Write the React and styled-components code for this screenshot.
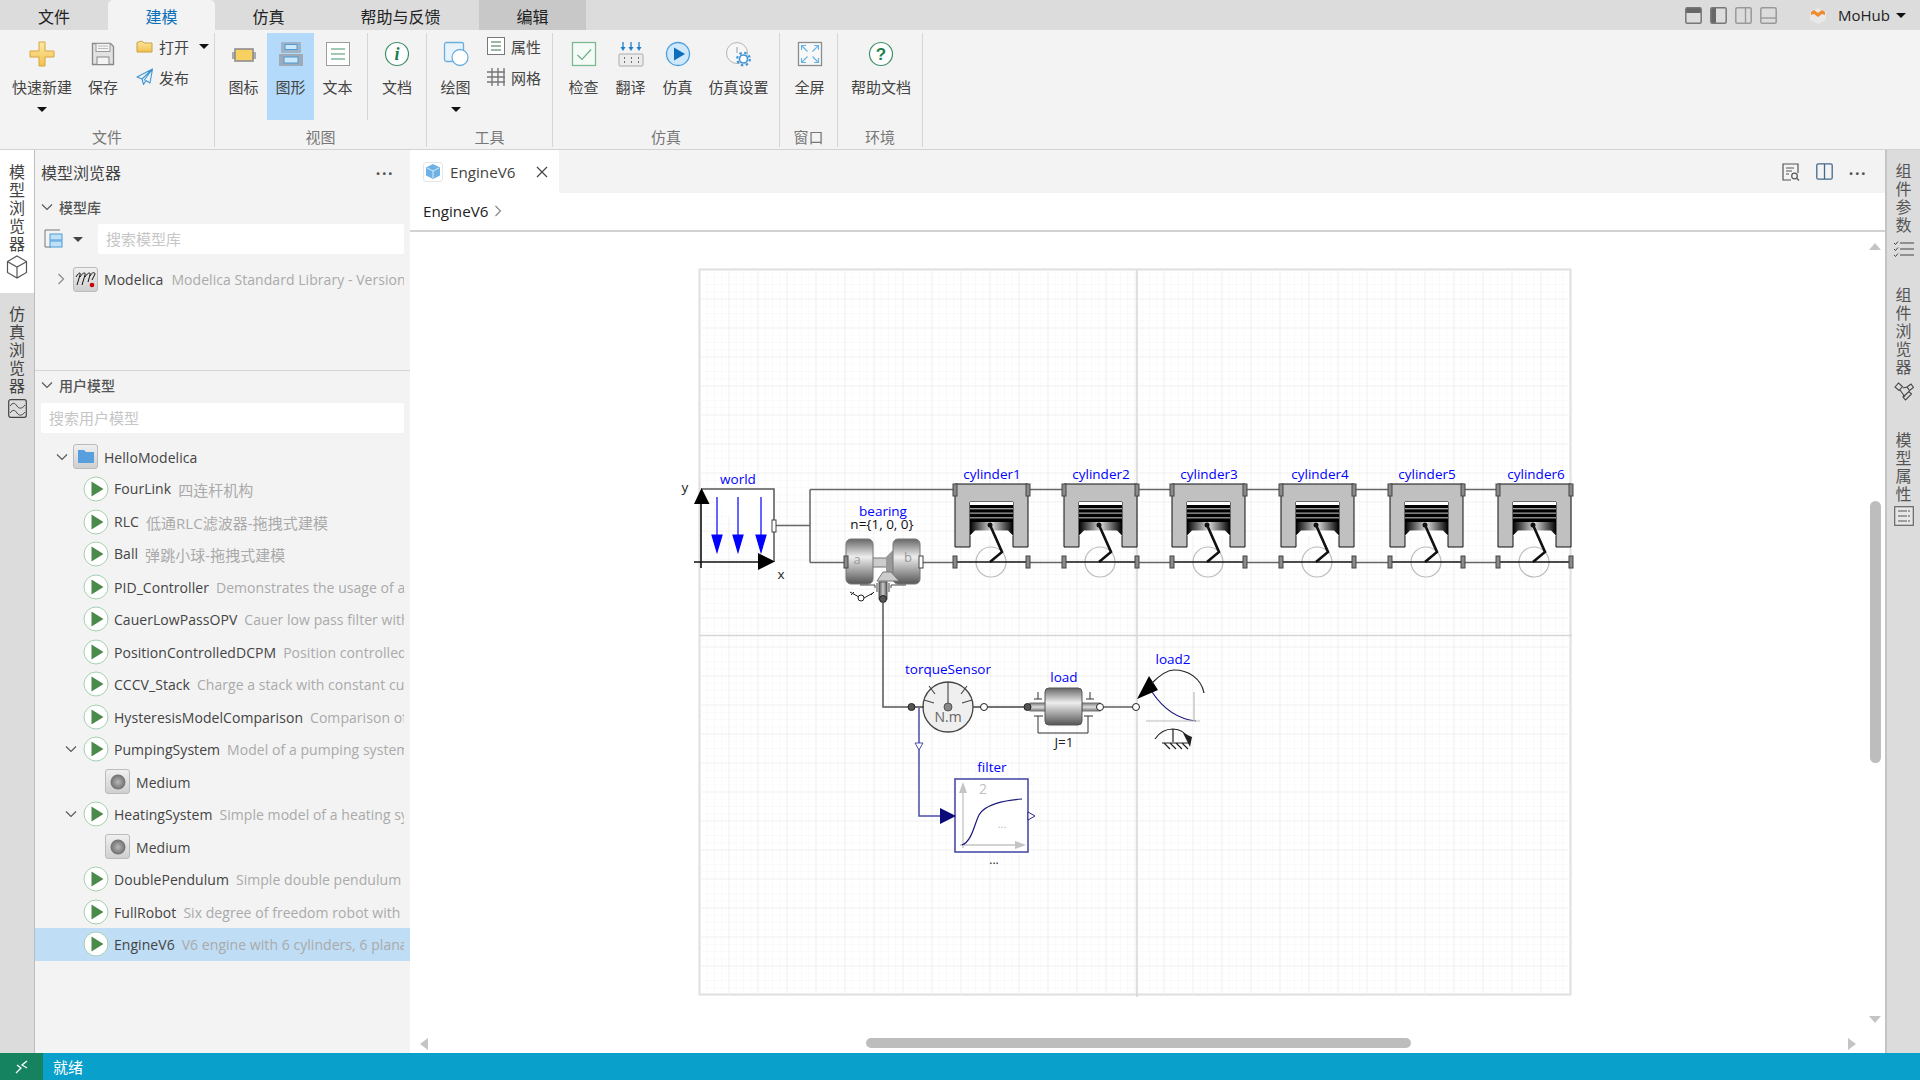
import React from "react";
import styled, { createGlobalStyle } from "styled-components";

const CJK = `"Open Sans", "Noto Sans CJK SC", sans-serif`;

const Global = createGlobalStyle`
  html, body { margin: 0; padding: 0; width: 1920px; height: 1080px; overflow: hidden; background: #fff; }
  body { font-family: ${CJK}; color: #333; }
  * { box-sizing: border-box; }
  svg { display: block; flex: none; }
`;

const Page = styled.div`
  width: 1920px; height: 1080px; display: flex; flex-direction: column; overflow: hidden;
`;
const TopBar = styled.div`
  height: 30px; background: #dcdcdc; display: flex; align-items: stretch; flex: none;
`;
const TopTab = styled.div`
  width: ${p => p.$w}px; display: flex; align-items: center; justify-content: center; padding-top: 1px;
  font-size: 16px; color: ${p => (p.$active ? "#0a70b8" : "#222")};
  background: ${p => (p.$active ? "#f3f3f3" : p.$edit ? "#c8c8c8" : "transparent")};
  border-radius: ${p => (p.$active ? "5px 5px 0 0" : "0")};
`;
const TopSpacer = styled.div`flex: 1;`;
const WinIcons = styled.div`
  display: flex; align-items: center; gap: 8px; margin-right: 33px;
`;
const UserBox = styled.div`
  display: flex; align-items: center; gap: 6px; font-size: 15px; color: #222; margin-right: 14px;
  > svg { margin-right: 6px; }
`;
const Caret = styled.span`
  display: inline-block; width: 0; height: 0; flex: none;
  border-left: 5px solid transparent; border-right: 5px solid transparent; border-top: 5px solid ${p => p.$c || "#111"};
`;
const Ribbon = styled.div`
  height: 120px; flex: none; background: #f3f3f3; border-bottom: 1px solid #d2d2d2; display: flex; padding-top: 3px;
`;
const Group = styled.div`
  width: ${p => p.$w}px; display: flex; flex-direction: column; flex: none; height: 114px;
  border-right: 1px solid #d6d6d6;
`;
const GroupItems = styled.div`
  display: flex; height: 87px; flex: none; padding-left: ${p => p.$pl || 0}px;
`;
const GroupLabel = styled.div`
  flex: 1; text-align: center; font-size: 15px; color: #777; line-height: 16px; padding-top: 9px;
`;
const Big = styled.div`
  width: ${p => p.$w}px; flex: none; height: 87px; display: flex; flex-direction: column; align-items: center;
  padding-top: 8px; font-size: 15px; color: #444; white-space: nowrap;
  background: ${p => (p.$on ? "#b3d9fb" : "transparent")};
  > span { margin-top: 11px; line-height: 18px; }
  > i { margin-top: 11px; display: flex; height: 5px; }
`;
const VDiv = styled.div`
  width: 1px; height: 87px; flex: none; background: #d6d6d6; margin-left: 6px;
`;
const SmallCol = styled.div`
  display: flex; flex-direction: column; gap: 5px; padding-left: ${p => p.$pl}px; width: ${p => p.$w}px; flex: none;
`;
const Small = styled.div`
  display: flex; align-items: center; gap: 6px; height: 26px; font-size: 15px; color: #444;
  > em { font-style: normal; display: flex; margin-left: 4px; }
`;
const Body = styled.div`flex: 1; display: flex; min-height: 0;`;
const Rail = styled.div`
  width: ${p => p.$w}px; flex: none; background: #dcdcdc; display: flex; flex-direction: column; align-items: center;
  ${p => (p.$right ? "border-left: 2px solid #c4c4c4; padding-top: 13px; gap: 30px;" : "border-right: 1px solid #bdbdbd;")}
`;
const RailTab = styled.div`
  width: 100%; display: flex; flex-direction: column; align-items: center; gap: ${p => p.$g || 3}px;
  padding-top: ${p => p.$pt || 0}px; height: ${p => (p.$h ? p.$h + "px" : "auto")};
  background: ${p => (p.$on ? "#fff" : "transparent")};
`;
const VText = styled.div`
  writing-mode: vertical-rl; font-size: 16px; letter-spacing: 2px; line-height: 18px; color: ${p => p.$c || "#555"};
  font-family: "Noto Sans CJK SC", sans-serif;
`;
const Panel = styled.div`
  width: 375px; flex: none; background: #f3f3f3; display: flex; flex-direction: column;
`;
const PanelHead = styled.div`
  height: 43px; flex: none; display: flex; align-items: center; justify-content: space-between;
  padding: 0 16px 0 6px; font-size: 16px; color: #444;
`;
const Dots = styled.div`
  font-size: 16px; font-weight: 700; letter-spacing: 1.5px; color: #555; line-height: 1; padding-bottom: 6px;
`;
const SecHead = styled.div`
  height: 28px; flex: none; display: flex; align-items: center; gap: 6px; padding-left: 6px;
  font-size: 14px; font-weight: 500; color: #555;
`;
const LibBlock = styled.div`
  height: 178px; flex: none; border-bottom: 1px solid #d4d4d4;
`;
const SearchRow = styled.div`
  display: flex; align-items: center; height: 30px; margin-top: 3px; padding: 0 6px 0 8px;
  > span { margin: 0 15px 0 10px; display: flex; }
`;
const Search = styled.div`
  flex: 1; height: 30px; background: #fff; border-radius: 2px;
  font-size: 15px; color: #c6c6c6; line-height: 30px; padding-left: 8px;
`;
const UserSearch = styled(Search)`
  margin: 4px 6px 0 6px; flex: none;
`;
const Tree = styled.div`
  margin-top: 7.5px; display: flex; flex-direction: column;
`;
const Row = styled.div`
  height: 32.5px; flex: none; display: flex; align-items: center; padding-left: ${p => p.$pl}px; padding-right: 6px;
  background: ${p => (p.$sel ? "#bfddf4" : "transparent")}; font-size: 14px;
`;
const LibRow = styled(Row)`margin-top: 10px; height: 30px;`;
const Chevron = styled.span`
  width: 12px; flex: none; display: flex; justify-content: center; margin-right: ${p => p.$mr || 0}px;
`;
const RowText = styled.div`
  flex: 1; min-width: 0; overflow: hidden; white-space: nowrap; margin-left: ${p => p.$ml || 6}px; letter-spacing: 0.05px;
  display: flex; gap: ${p => p.$gap || 8}px; padding-top: 1px;
`;
const Name = styled.span`color: #444;`;
const Desc = styled.span`color: #aaa; font-size: ${p => (p.$cjk ? 15 : 14)}px;`;
const Main = styled.div`
  flex: 1; min-width: 0; display: flex; flex-direction: column; background: #fff; position: relative;
`;
const DocTabs = styled.div`
  height: 43px; flex: none; background: #f3f3f3; display: flex; justify-content: space-between;
`;
const DocTab = styled.div`
  width: 149px; background: #fff; display: flex; align-items: center; padding-left: 13px; font-size: 15.2px; color: #444;
  > b { font-weight: 400; margin-left: 7px; flex: 1; }
  > svg:last-child { margin-right: 11px; }
`;
const DocTools = styled.div`
  display: flex; align-items: center; gap: 16px; padding-right: 18px;
`;
const Crumb = styled.div`
  height: 39px; flex: none; border-bottom: 2px solid #d2d2d2; padding-left: 13px; display: flex; align-items: center; gap: 6px;
  font-size: 15.2px; color: #222; padding-bottom: 1px;
`;
const Canvas = styled.div`flex: 1; min-height: 0; position: relative; overflow: hidden;`;
const CanvasSvg = styled.svg`width: 100%; height: 100%;`;
const VThumb = styled.div`
  position: absolute; right: 4px; top: 269px; width: 11px; height: 262px; border-radius: 6px; background: #bdbdbd;
`;
const HThumb = styled.div`
  position: absolute; left: 456px; bottom: 5px; width: 545px; height: 10px; border-radius: 5px; background: #bdbdbd;
`;
const ArrowU = styled.div`
  position: absolute; right: 4px; width: 0; height: 0; border-left: 6px solid transparent; border-right: 6px solid transparent;
  ${p => (p.$down ? "bottom: 30px; border-top: 7px solid #c4c4c4;" : "top: 11px; border-bottom: 7px solid #c4c4c4;")}
`;
const ArrowH = styled.div`
  position: absolute; bottom: 3px; width: 0; height: 0; border-top: 6px solid transparent; border-bottom: 6px solid transparent;
  ${p => (p.$right ? "right: 29px; border-left: 8px solid #c4c4c4;" : "left: 10px; border-right: 8px solid #c4c4c4;")}
`;
const Status = styled.div`
  height: 27px; flex: none; background: #0aa0cc; display: flex; align-items: center; color: #fff; font-size: 15px;
`;
const StatusIcon = styled.div`
  width: 43px; height: 100%; background: #15835f; display: flex; align-items: center; justify-content: center; margin-right: 10px;
`;

/* ---------- Icons ---------- */
const I = ({ w = 26, h = 26, children }) => <svg width={w} height={h} viewBox={`0 0 ${w} ${h}`} fill="none">{children}</svg>;
const Defs = () => (
  <svg width="0" height="0" style={{ position: "absolute" }}>
    <defs>
      <linearGradient id="gold" x1="0" y1="0" x2="0" y2="1"><stop offset="0" stopColor="#fde9a4" /><stop offset="1" stopColor="#f3c04e" /></linearGradient>
      <radialGradient id="ball"><stop offset="0" stopColor="#b8b8b8" /><stop offset="1" stopColor="#6e6e6e" /></radialGradient>
    </defs>
  </svg>
);
const PlusIcon = () => <I><path d="M10 1h6v9h9v6h-9v9h-6v-9H1v-6h9z" fill="url(#gold)" stroke="#d6a63a" /></I>;
const SaveIcon = () => (
  <I><path d="M2.5 2.5h18l3 3v18h-21z" fill="#e2e2e2" stroke="#888" strokeWidth="1.3" /><rect x="6" y="2.5" width="14" height="8" fill="#f4f4f4" stroke="#999" /><path d="M8 5h10M8 7.5h10" stroke="#bbb" /><rect x="7" y="16" width="12" height="7.5" fill="#f4f4f4" stroke="#888" /></I>
);
const FolderIcon = () => <I w={17} h={14}><path d="M1 3.5 6 2l2 2h8v9H1z" fill="url(#gold)" stroke="#c9a13f" /></I>;
const SendIcon = () => <I w={17} h={18}><path d="M16.5 1 1 9l5 2 1.5 5.5 2.5-4 4 2.5zM6 11 16.5 1 8 12.5" stroke="#3d95d6" strokeWidth="1.1" strokeLinejoin="round" /></I>;
const ChipIcon = () => <I><rect x="1" y="11" width="24" height="7" fill="#aaa" /><rect x="4" y="8" width="18" height="12" fill="#f7d160" stroke="#8e8e8e" strokeWidth="1.6" /></I>;
const DiagramIcon = () => (
  <I><rect x="3" y="1" width="20" height="11" rx="1" fill="#a0b3c6" /><rect x="1" y="13" width="24" height="12" rx="1" fill="#9eaab8" /><rect x="7" y="3.5" width="12" height="5" fill="#cde7fb" stroke="#4b9bd8" /><rect x="6" y="16" width="14" height="6" fill="#cde7fb" stroke="#4b9bd8" /></I>
);
const TextIcon = () => <I><rect x="1.5" y="1.5" width="23" height="23" fill="#fff" stroke="#9c9c9c" /><path d="M6 8h14M6 13h14M6 18h14" stroke="#80b89a" strokeWidth="1.3" /></I>;
const InfoIcon = () => <I><circle cx="13" cy="13" r="11.5" fill="#fff" stroke="#3f9068" strokeWidth="1.2" /><text x="13" y="19" textAnchor="middle" fontFamily="Liberation Serif, serif" fontStyle="italic" fontWeight="700" fontSize="18" fill="#1e8050">i</text></I>;
const DrawIcon = () => <I><rect x="1.5" y="1.5" width="19" height="19" rx="2" fill="#e9f3fb" stroke="#6aaee0" strokeWidth="1.3" /><circle cx="17" cy="16.5" r="8" fill="#fff" stroke="#6aaee0" strokeWidth="1.3" /></I>;
const PropIcon = () => <I w={18} h={18}><rect x=".5" y=".5" width="17" height="17" fill="#fff" stroke="#777" /><path d="M4 5h10M4 9h10M4 13h10" stroke="#7f9f8a" strokeWidth="1.4" /></I>;
const GridIcon = () => <I w={18} h={18}><path d="M5 0v18M11 0v18M17 0v18M0 4h18M0 9h18M0 14h18" stroke="#777" strokeWidth="1.4" /></I>;
const CheckIcon = () => <I><rect x="1.5" y="1.5" width="23" height="23" fill="#f4fbf6" stroke="#7fb995" strokeWidth="1.3" /><path d="M6.5 14l4.5 4.5 9-10" stroke="#6cad83" strokeWidth="1.2" /></I>;
const TransIcon = () => (
  <I><path d="M5 1v7M13 1v7M21 1v7" stroke="#1f7fc8" strokeWidth="1.3" /><path d="M2.5 6 5 10l2.5-4zM10.5 6 13 10l2.5-4zM18.5 6 21 10l2.5-4z" fill="#1f7fc8" /><rect x="1" y="13" width="24" height="12" rx="1" fill="#ececec" stroke="#aaa" /><path d="M6 17h1M13 17h1M20 17h1M6 21h1M13 21h1M20 21h1" stroke="#444" strokeWidth="1.6" /></I>
);
const SimIcon = () => <I><circle cx="13" cy="13" r="11.5" fill="#cfe8fb" stroke="#4c9fdc" strokeWidth="1.3" /><path d="M9 6.5 20 13 9 19.5z" fill="#0d6fbb" /></I>;
const SetIcon = () => (
  <I w={28} h={26}><circle cx="12" cy="12" r="10.5" fill="#f7f7f7" stroke="#b5b5b5" /><path d="M12 6v6" stroke="#999" /><circle cx="18.5" cy="18" r="4" fill="#fff" stroke="#3d95d6" strokeWidth="1.6" /><circle cx="18.5" cy="18" r="6.3" stroke="#3d95d6" strokeWidth="2.2" strokeDasharray="2.4 2.55" /></I>
);
const FullIcon = () => (
  <I><rect x="1.5" y="1.5" width="23" height="23" fill="#f8f8f8" stroke="#8c8c8c" strokeWidth="1.3" /><path d="M4.5 4.5l6 6M21.5 4.5l-6 6M4.5 21.5l6-6M21.5 21.5l-6-6M4.5 9V4.5H9M17 4.5h4.5V9M4.5 17v4.5H9M17 21.5h4.5V17" stroke="#62b2e4" strokeWidth="1.1" /></I>
);
const HelpIcon = () => <I><circle cx="13" cy="13" r="11.5" fill="#fff" stroke="#3f9068" strokeWidth="1.2" /><text x="13" y="19" textAnchor="middle" fontFamily="Liberation Sans, sans-serif" fontWeight="700" fontSize="17" fill="#1e8050">?</text></I>;
const Win = ({ k }) => (
  <svg width="17" height="17" viewBox="0 0 17 17" fill="none">
    {k === 0 && <rect x="1" y="1" width="15" height="5" fill="#666" />}
    {k === 1 && <rect x="1" y="1" width="5" height="15" fill="#666" />}
    {k === 2 && <path d="M10.5 1v15" stroke="#999" strokeWidth="1.4" />}
    {k === 3 && <path d="M1 11h15" stroke="#999" strokeWidth="1.4" />}
    <rect x=".8" y=".8" width="15.4" height="15.4" rx="1.5" stroke={k < 2 ? "#777" : "#999"} strokeWidth="1.5" />
  </svg>
);
const Logo = () => (
  <svg width="16" height="17" viewBox="0 0 16 17">
    <path d="M0 5l8-4 8 4v8l-8 4-8-4z" fill="#e8e8e8" />
    <path d="M1 5l3-2 4 3 4-3 3 2v3l-3-1-4 3-4-3-3 1z" fill="#f08a2c" />
  </svg>
);
const Cube = ({ c = "#555", s = 22 }) => (
  <svg width={s} height={s + 2} viewBox="0 0 22 24" fill="none"><path d="M11 1l9.5 5.5v11L11 23l-9.5-5.5v-11zM2 7l9 5 9-5M11 12v11" stroke={c} strokeWidth="1.2" /></svg>
);
const WaveIcon = () => <svg width="19" height="19" viewBox="0 0 19 19" fill="none"><rect x=".7" y=".7" width="17.6" height="17.6" rx="2" stroke="#444" strokeWidth="1.2" /><path d="M2 7c3-4 5-3 7 0s5 3 8-1M2 14c3-4 5-3 7 0s5 3 8-1" stroke="#444" /></svg>;
const ListIcon = () => <svg width="22" height="16" viewBox="0 0 22 16" fill="none"><path d="M7 2h14M7 8h14M7 14h14" stroke="#444" strokeWidth="1.1" /><path d="M1 2l1.5 1.5L5 .5M1 8l1.5 1.5L5 6.5M1 14l1.5 1.5L5 12.5" stroke="#444" /></svg>;
const NodeIcon = () => <svg width="20" height="20" viewBox="0 0 20 20" fill="none"><path d="M1 5l3.5-4 4 3.5-3.5 4zM13 5l4-3 2.5 3.5-4 3zM9 15l6-5.5 2.5 2.5-6 6zM6 8l5 7M9 6l4-1" stroke="#444" strokeWidth="1.1" /></svg>;
const FormIcon = () => <svg width="20" height="20" viewBox="0 0 20 20" fill="none"><rect x=".7" y=".7" width="18.6" height="18.6" fill="#e6e6e6" stroke="#666" strokeWidth="1.2" /><path d="M4 5h12M4 10h12M4 15h12" stroke="#555" strokeDasharray="9 1 2 0" /></svg>;
const Play = () => <svg width="26" height="26" viewBox="0 0 26 26"><circle cx="13" cy="13" r="12" fill="#fff" stroke="#a6cfae" /><path d="M8.5 5.5 20.5 13l-12 7.5z" fill="#4a8a4a" /></svg>;
const ChevD = () => <svg width="12" height="8" viewBox="0 0 12 8" fill="none"><path d="M1 1.5l5 5 5-5" stroke="#555" strokeWidth="1.1" /></svg>;
const ChevR = ({ c = "#888" }) => <svg width="8" height="12" viewBox="0 0 8 12" fill="none"><path d="M1.5 1l5 5-5 5" stroke={c} strokeWidth="1.2" /></svg>;
const TileBox = styled.div`
  width: 25px; height: 25px; flex: none; border-radius: 3px; border: 1px solid #bbb; background: linear-gradient(#f0f0f0, #cfcfcf);
  display: flex; align-items: center; justify-content: center;
`;
const LibTile = () => (
  <TileBox><svg width="22" height="18" viewBox="0 0 22 18" fill="none"><path d="M1 7c3-5 5-5 4-2L2 15M5 7c3-5 6-5 5-2L7 15M10 7c3-5 6-5 5-2l-2 7M15 6c2-4 5-4 5-2l-3 6" stroke="#111" /><circle cx="17" cy="15" r="2.3" fill="#c00" /></svg></TileBox>
);
const FolderTile = () => <TileBox><svg width="18" height="15" viewBox="0 0 18 15"><path d="M1 1h6l2 2h8v11H1z" fill="#5a9fdd" /></svg></TileBox>;
const BallTile = () => <TileBox><svg width="16" height="16" viewBox="0 0 16 16"><circle cx="8" cy="8" r="7.5" fill="url(#ball)" /></svg></TileBox>;
const TreeSwitch = () => (
  <svg width="20" height="20" viewBox="0 0 20 20" fill="none"><path d="M17 1H2v17h6" stroke="#777" /><rect x="7" y="5" width="12" height="6" fill="#bfe0f7" stroke="#4b9bd8" /><rect x="7" y="12" width="12" height="6" fill="#bfe0f7" stroke="#4b9bd8" /></svg>
);
const DocTile = styled.div`
  width: 20px; height: 20px; flex: none; border: 1px solid #e6e6e6; border-radius: 3px; display: flex; align-items: center; justify-content: center;
`;
const CubeTile = () => (
  <DocTile><svg width="14" height="15" viewBox="0 0 14 15"><path d="M7 0l7 3.5v8L7 15l-7-3.5v-8z" fill="#6db1e6" /><path d="M1 4l6 3 6-3M7 7v7" stroke="#d8ecfb" fill="none" /></svg></DocTile>
);
const Close = () => <svg width="12" height="12" viewBox="0 0 12 12"><path d="M1 1l10 10M11 1 1 11" stroke="#444" strokeWidth="1.2" /></svg>;
const FindIcon = () => <svg width="18" height="18" viewBox="0 0 18 18" fill="none"><path d="M9 17H1V1h15v9" stroke="#555" strokeWidth="1.2" /><path d="M4 5h8M4 8h6M4 11h3" stroke="#555" /><circle cx="12.5" cy="13" r="2.8" stroke="#555" strokeWidth="1.2" /><path d="M14.5 15l2.5 2.5" stroke="#555" strokeWidth="1.2" /></svg>;
const SplitIcon = () => <svg width="17" height="17" viewBox="0 0 17 17" fill="none"><rect x=".8" y=".8" width="15.4" height="15.4" rx="1.5" stroke="#44688c" strokeWidth="1.3" /><path d="M8.5 1v15" stroke="#44688c" strokeWidth="1.3" /></svg>;
const Merge = () => <svg width="14" height="14" viewBox="0 0 14 14" fill="none"><path d="M1 13l5-5-4-3M12 1 7 5l5 3" stroke="#fff" strokeWidth="1.3" /></svg>;

/* ---------- Diagram ---------- */
const T = styled.text`
  font-family: "Open Sans", sans-serif; font-size: ${p => p.$s || 13.5}px; text-anchor: middle; letter-spacing: 0;
`;
const Port = ({ x, y, fill = "#8a8a8a" }) => <rect x={x} y={y} width={4} height={12} fill={fill} stroke="#444" />;
const Cyl = ({ x }) => (
  <g>
    <circle cx={x + 36} cy={562} r={15} fill="none" stroke="#bbb" strokeWidth="1.2" />
    <path d={`M${x} 484h73v63h-15v-45h-43v45h-15z`} fill="#c0c0c0" stroke="#111" />
    <rect x={x + 15} y={502} width={43} height={3} fill="#fff" />
    <rect x={x + 15} y={505} width={43} height={17} fill="url(#stripes)" />
    <rect x={x + 15} y={522} width={43} height={13} fill="url(#pist)" />
    <path d={`M${x + 15} 535.5l5-5h33l5 5z`} fill="#fff" />
    <path d={`M${x + 35} 525l12 27-12 10`} fill="none" stroke="#111" strokeWidth="2.6" />
    <circle cx={x + 35} cy={525} r={2.5} fill="#111" />
    <path d={`M${x} 562h73`} stroke="#111" strokeWidth="1.6" />
    <Port x={x - 2} y={484} /><Port x={x + 71} y={484} /><Port x={x - 2} y={556} /><Port x={x + 71} y={556} />
  </g>
);

const Diagram = () => {
  const xs = [955, 1064, 1172, 1281, 1390, 1498];
  const labels = [992, 1101, 1209, 1320, 1427, 1536];
  return (
    <CanvasSvg viewBox="410 232 1475 821">
      <defs>
        <pattern id="minor" x="699.5" y="269.5" width="7.25" height="7.25" patternUnits="userSpaceOnUse"><path d="M0 0h7.25M0 0v7.25" stroke="#f5f5f5" strokeWidth="1" /></pattern>
        <pattern id="major" x="699.5" y="269.5" width="29" height="29" patternUnits="userSpaceOnUse"><path d="M0 0h29M0 0v29" stroke="#e9e9e9" strokeWidth="1" /></pattern>
        <linearGradient id="stripes" x1="0" y1="0" x2="0" y2="1">
          <stop offset="0" stopColor="#000" /><stop offset=".16" stopColor="#000" /><stop offset=".2" stopColor="#aaa" /><stop offset=".3" stopColor="#000" /><stop offset=".42" stopColor="#000" /><stop offset=".47" stopColor="#bbb" /><stop offset=".56" stopColor="#000" /><stop offset=".7" stopColor="#000" /><stop offset=".74" stopColor="#999" /><stop offset=".84" stopColor="#000" /><stop offset="1" stopColor="#000" />
        </linearGradient>
        <linearGradient id="pist" x1="0" y1="0" x2="1" y2="0"><stop offset="0" stopColor="#000" /><stop offset=".5" stopColor="#ddd" /><stop offset="1" stopColor="#000" /></linearGradient>
        <linearGradient id="drum" x1="0" y1="0" x2="0" y2="1"><stop offset="0" stopColor="#666" /><stop offset=".4" stopColor="#eee" /><stop offset="1" stopColor="#555" /></linearGradient>
        <linearGradient id="rod" x1="0" y1="0" x2="0" y2="1"><stop offset="0" stopColor="#777" /><stop offset=".5" stopColor="#ddd" /><stop offset="1" stopColor="#777" /></linearGradient>
        <linearGradient id="rodV" x1="0" y1="0" x2="1" y2="0"><stop offset="0" stopColor="#555" /><stop offset=".5" stopColor="#ccc" /><stop offset="1" stopColor="#555" /></linearGradient>
      </defs>
      <rect x="699.5" y="269.5" width="871" height="725" fill="#fff" stroke="#dcdcdc" strokeWidth="2" />
      <rect x="699.5" y="269.5" width="871" height="725" fill="url(#minor)" />
      <rect x="699.5" y="269.5" width="871" height="725" fill="url(#major)" />
      <path d="M1137 270v727M700 635.5h872" stroke="#d6d6d6" strokeWidth="1.5" />

      {/* connection lines */}
      <path d="M776 525.5h34M810 489.5v73M810 489.5h145M810 562.5h35M923 562.5h32" stroke="#666" strokeWidth="1.5" fill="none" />
      {xs.slice(0, 5).map((x, i) => <path key={x} d={`M${x + 73} 489.5H${xs[i + 1]}M${x + 73} 562.5H${xs[i + 1]}`} stroke="#666" strokeWidth="1.5" />)}

      {/* world */}
      <path d="M701 489h73v73" fill="#fff" stroke="#555" strokeWidth="1.5" />
      <path d="M701 494v74M694 562h70" stroke="#111" strokeWidth="1.6" />
      <path d="M694 504 701.5 488 709.5 504zM758 553 775 561.5 758 570z" fill="#000" />
      {[717, 738, 761].map(x => <path key={x} d={`M${x} 497v40M${x - 5} 535h10l-5 17z`} stroke="#00f" strokeWidth="1.2" fill="#00f" />)}
      <Port x={772} y={520} fill="#fff" />
      <T x={738} y={484} fill="#00f">world</T>
      <T x={685} y={492} fill="#222">y</T>
      <T x={781} y={579} fill="#222">x</T>

      {/* bearing */}
      <T x={883} y={516} fill="#00f">bearing</T>
      <T x={882} y={529} fill="#111">{"n={1, 0, 0}"}</T>
      <rect x={872} y={558} width={22} height={9} fill="#ccc" stroke="#777" />
      <path d="M886 557l8-8v30l-8-7z" fill="#999" />
      <rect x={846} y={539} width={27} height={45} rx={5} fill="url(#drum)" stroke="#777" />
      <rect x={893} y={539} width={27} height={45} rx={5} fill="url(#drum)" stroke="#777" />
      <T x={857} y={564} fill="#999" $s={13}>a</T>
      <T x={908} y={562} fill="#999" $s={13}>b</T>
      <path d="M877 581l6-9h8l8 9z" fill="#ccc" stroke="#777" />
      <path d="M860 585h15v3M906 585h-15v3M877 583v9M889 583v9" stroke="#444" fill="none" />
      <rect x={879} y={582} width={8} height={17} fill="url(#rodV)" stroke="#555" />
      <circle cx={883} cy={599} r={3.5} fill="#555" stroke="#222" />
      <circle cx={861} cy={598} r={3} fill="#fff" stroke="#222" />
      <path d="M850 592l9 5M864 598l9-5M854 592l-3 3M874 592l-3 3" stroke="#222" fill="none" />
      <Port x={844} y={556} />
      <Port x={919} y={556} fill="#fff" />
      <path d="M883 600v107h28" stroke="#555" strokeWidth="1.5" fill="none" />

      {xs.map(x => <Cyl key={x} x={x} />)}
      {labels.map((x, i) => <T key={x} x={x} y={479} fill="#00f">{`cylinder${i + 1}`}</T>)}

      {/* torque sensor */}
      <T x={948} y={674} fill="#00f">torqueSensor</T>
      <path d="M919 708v108h21" stroke="#4a4ea5" strokeWidth="1.5" fill="none" />
      <circle cx={948} cy={707} r={25} fill="#efefef" stroke="#444" strokeWidth="1.3" />
      <path d="M948 682v22M929 686l6 8M967 686l-6 8M924 700l10 3M972 700l-10 3" stroke="#444" strokeWidth="1.1" />
      <circle cx={948} cy={707} r={4} fill="#888" stroke="#555" />
      <T x={948} y={722} fill="#666" $s={14}>N.m</T>
      <circle cx={911.5} cy={707} r={3.5} fill="#555" stroke="#222" />
      <path d="M915 707h9M973 707h8M987.5 707h37" stroke="#444" strokeWidth="1.3" />
      <circle cx={984} cy={707} r={3.5} fill="#fff" stroke="#222" />
      <path d="M915 743h8l-4 7z" fill="#fff" stroke="#4a4ea5" />

      {/* load */}
      <T x={1064} y={682} fill="#00f">load</T>
      <rect x={1030} y={703} width={52} height={8} fill="url(#rod)" stroke="#777" />
      <rect x={1082} y={703} width={18} height={8} fill="url(#rod)" stroke="#777" />
      <rect x={1045} y={688} width={37} height={37} rx={4} fill="url(#drum)" stroke="#555" />
      <path d="M1038 692v7M1034 699h8M1090 692v7M1086 699h8M1034 716h9M1038 716v17h50v-17M1093 716h-9" stroke="#333" fill="none" />
      <circle cx={1027.5} cy={707} r={3.5} fill="#555" stroke="#222" />
      <circle cx={1100} cy={707} r={3.5} fill="#fff" stroke="#222" />
      <path d="M1104 707h29" stroke="#444" strokeWidth="1.3" />
      <T x={1064} y={747} fill="#222">J=1</T>

      {/* load2 */}
      <T x={1173} y={664} fill="#00f">load2</T>
      <circle cx={1136} cy={707} r={3.5} fill="#fff" stroke="#222" />
      <path d="M1137 699 1149 676 1158 690z" fill="#000" />
      <path d="M1152 683c8-8 15-13 22-13 14 0 27 8 30 23" stroke="#222" strokeWidth="1.2" fill="none" />
      <path d="M1152 692c10 15 25 27 44 29" stroke="#1a1a7a" strokeWidth="1.2" fill="none" />
      <path d="M1146 721h54M1194 692v29" stroke="#bbb" strokeWidth="1.2" />
      <path d="M1155 739c6-9 13-10 18-10 8 0 13 4 17 11M1173 729v13M1162 743h28M1164 743l6 6M1170 743l6 6M1176 743l6 6M1182 743l6 6" stroke="#222" strokeWidth="1.2" fill="none" />
      <path d="M1183 733l9 4-2 10z" fill="#222" />

      {/* filter */}
      <T x={992} y={772} fill="#00f">filter</T>
      <rect x={955} y={779} width={73} height={73} fill="#fff" stroke="#4a4ea5" strokeWidth="1.6" />
      <path d="M963 848V786M960 845h60" stroke="#c4c4c4" strokeWidth="1.3" />
      <path d="M959 793l4-11 4 11zM1015 841l11 4-11 4z" fill="#c4c4c4" />
      <path d="M962 845c10-4 12-20 17-30s25-15 43-16" stroke="#1a1a7a" strokeWidth="1.2" fill="none" />
      <T x={983} y={794} fill="#c0c0c0" $s={14}>2</T>
      <T x={1002} y={828} fill="#bbb" $s={11}>...</T>
      <T x={994} y={864} fill="#222" $s={12}>...</T>
      <path d="M940 808l16 8-16 8z" fill="#0a0a78" />
      <path d="M1028 812l7 4-7 4z" fill="#fff" stroke="#2a2a90" />
    </CanvasSvg>
  );
};

const BigItem = ({ w, icon, label, on, drop }) => (
  <Big $w={w} $on={on}>{icon}<span>{label}</span>{drop && <i><Caret /></i>}</Big>
);
const treeData = [
  ["FourLink", "四连杆机构"], ["RLC", "低通RLC滤波器-拖拽式建模"], ["Ball", "弹跳小球-拖拽式建模"],
  ["PID_Controller", "Demonstrates the usage of a Continuous.LimPID controller"],
  ["CauerLowPassOPV", "Cauer low pass filter with operational amplifiers"],
  ["PositionControlledDCPM", "Position controlled DC machine"],
  ["CCCV_Stack", "Charge a stack with constant current"],
  ["HysteresisModelComparison", "Comparison of hysteresis models"],
  ["PumpingSystem", "Model of a pumping system for drinking water", true],
  ["Medium", "", false, true],
  ["HeatingSystem", "Simple model of a heating system", true],
  ["Medium", "", false, true],
  ["DoublePendulum", "Simple double pendulum with two revolute joints"],
  ["FullRobot", "Six degree of freedom robot with path planning"],
  ["EngineV6", "V6 engine with 6 cylinders, 6 planar"],
];

export default function App() {
  return (
    <Page>
      <Global />
      <Defs />
      <TopBar>
        <TopTab $w={108}>文件</TopTab>
        <TopTab $w={107} $active>建模</TopTab>
        <TopTab $w={107}>仿真</TopTab>
        <TopTab $w={157}>帮助与反馈</TopTab>
        <TopTab $w={107} $edit>编辑</TopTab>
        <TopSpacer />
        <WinIcons>{[0, 1, 2, 3].map(k => <Win key={k} k={k} />)}</WinIcons>
        <UserBox><Logo /><span>MoHub</span><Caret /></UserBox>
      </TopBar>
      <Ribbon>
        <Group $w={215}>
          <GroupItems $pl={7}>
            <BigItem w={70} icon={<PlusIcon />} label="快速新建" drop />
            <BigItem w={52} icon={<SaveIcon />} label="保存" />
            <SmallCol $w={85} $pl={7}>
              <Small><FolderIcon /><span>打开</span><em><Caret /></em></Small>
              <Small><SendIcon /><span>发布</span></Small>
            </SmallCol>
          </GroupItems>
          <GroupLabel>文件</GroupLabel>
        </Group>
        <Group $w={212}>
          <GroupItems $pl={5}>
            <BigItem w={47} icon={<ChipIcon />} label="图标" />
            <BigItem w={47} icon={<DiagramIcon />} label="图形" on />
            <BigItem w={47} icon={<TextIcon />} label="文本" />
            <VDiv />
            <BigItem w={58} icon={<InfoIcon />} label="文档" />
          </GroupItems>
          <GroupLabel>视图</GroupLabel>
        </Group>
        <Group $w={126}>
          <GroupItems $pl={0}>
            <BigItem w={57} icon={<DrawIcon />} label="绘图" drop />
            <SmallCol $w={60} $pl={3}>
              <Small><PropIcon /><span>属性</span></Small>
              <Small><GridIcon /><span>网格</span></Small>
            </SmallCol>
          </GroupItems>
          <GroupLabel>工具</GroupLabel>
        </Group>
        <Group $w={227}>
          <GroupItems $pl={7}>
            <BigItem w={47} icon={<CheckIcon />} label="检查" />
            <BigItem w={47} icon={<TransIcon />} label="翻译" />
            <BigItem w={47} icon={<SimIcon />} label="仿真" />
            <BigItem w={75} icon={<SetIcon />} label="仿真设置" />
          </GroupItems>
          <GroupLabel>仿真</GroupLabel>
        </Group>
        <Group $w={58}>
          <GroupItems $pl={1}><BigItem w={57} icon={<FullIcon />} label="全屏" /></GroupItems>
          <GroupLabel>窗口</GroupLabel>
        </Group>
        <Group $w={85}>
          <GroupItems $pl={1}><BigItem w={84} icon={<HelpIcon />} label="帮助文档" /></GroupItems>
          <GroupLabel>环境</GroupLabel>
        </Group>
      </Ribbon>
      <Body>
        <Rail $w={35}>
          <RailTab $on $h={143} $pt={14} $g={1}><VText $c="#444">模型浏览器</VText><Cube /></RailTab>
          <RailTab $pt={13}><VText $c="#444">仿真浏览器</VText><WaveIcon /></RailTab>
        </Rail>
        <Panel>
          <PanelHead><span>模型浏览器</span><Dots>...</Dots></PanelHead>
          <LibBlock>
            <SecHead><ChevD /><span>模型库</span></SecHead>
            <SearchRow>
              <TreeSwitch />
              <span><Caret $c="#444" /></span>
              <Search>搜索模型库</Search>
            </SearchRow>
            <LibRow $pl={20}>
              <Chevron $mr={6}><ChevR /></Chevron>
              <LibTile />
              <RowText><Name>Modelica</Name><Desc>Modelica Standard Library - Version 4.0.0</Desc></RowText>
            </LibRow>
          </LibBlock>
          <SecHead><ChevD /><span>用户模型</span></SecHead>
          <UserSearch>搜索用户模型</UserSearch>
          <Tree>
            <Row $pl={21}>
              <Chevron $mr={5}><ChevD /></Chevron>
              <FolderTile />
              <RowText><Name>HelloModelica</Name></RowText>
            </Row>
            {treeData.map(([n, d, exp, med], i) => (
              <Row key={i} $pl={med ? 70 : exp ? 30 : 48} $sel={n === "EngineV6"}>
                {exp && <Chevron $mr={6}><ChevD /></Chevron>}
                {med ? <BallTile /> : <Play />}
                <RowText $ml={med ? 6 : 5} $gap={7}><Name>{n}</Name>{d && <Desc $cjk={/[\u4e00-\u9fa5]/.test(d)}>{d}</Desc>}</RowText>
              </Row>
            ))}
          </Tree>
        </Panel>
        <Main>
          <DocTabs>
            <DocTab><CubeTile /><b>EngineV6</b><Close /></DocTab>
            <DocTools>
              <FindIcon /><SplitIcon /><Dots>...</Dots>
            </DocTools>
          </DocTabs>
          <Crumb>EngineV6<ChevR /></Crumb>
          <Canvas>
            <Diagram />
            <ArrowU />
            <VThumb />
            <ArrowU $down />
            <ArrowH />
            <HThumb />
            <ArrowH $right />
          </Canvas>
        </Main>
        <Rail $w={35} $right>
          <RailTab $g={6}><VText>组件参数</VText><ListIcon /></RailTab>
          <RailTab $g={5}><VText>组件浏览器</VText><NodeIcon /></RailTab>
          <RailTab $g={2}><VText>模型属性</VText><FormIcon /></RailTab>
        </Rail>
      </Body>
      <Status><StatusIcon><Merge /></StatusIcon>就绪</Status>
    </Page>
  );
}
